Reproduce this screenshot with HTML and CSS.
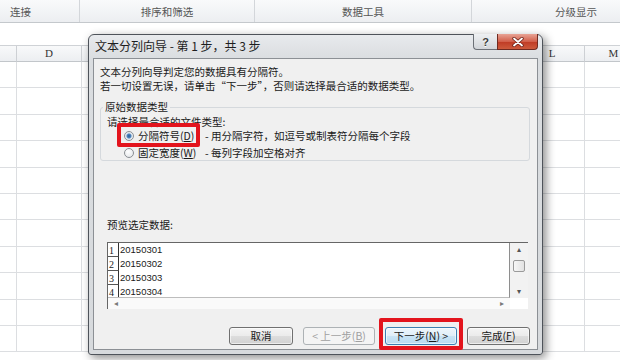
FILE: index.html
```html
<!DOCTYPE html>
<html lang="zh-CN">
<head>
  <meta charset="UTF-8">
  <meta name="viewport" content="width=device-width, initial-scale=1.0">
  <title>文本分列向导</title>
  <link rel="stylesheet" href="styles.css">
</head>
<body>
  <div class="ribbon">
    <div class="grp grp-conn">连接</div>
    <div class="grp grp-sort">排序和筛选</div>
    <div class="grp grp-tools">数据工具</div>
    <div class="grp grp-outline">分级显示</div>
  </div>
  <div class="formula-bar"></div>
  <div class="sheet" id="sheet">
    <!-- cells are built below -->
  </div>

  <div class="dialog">
    <div class="titlebar">
      <span class="title">文本分列向导 - 第 1 步，共 3 步</span>
      <span class="cap-btn cap-help">?</span>
      <span class="cap-btn cap-close">
        <svg width="12" height="10" viewBox="0 0 12 10">
          <path d="M2 1.5 L10 8.5 M10 1.5 L2 8.5" stroke="#6b2016" stroke-width="3.4" stroke-linecap="round"/>
          <path d="M2 1.5 L10 8.5 M10 1.5 L2 8.5" stroke="#fff" stroke-width="1.8" stroke-linecap="round"/>
        </svg>
      </span>
    </div>
    <div class="client">
      <p class="intro">文本分列向导判定您的数据具有分隔符。<br>若一切设置无误，请单击“下一步”，否则请选择最合适的数据类型。</p>
      <fieldset class="group-box">
        <legend>原始数据类型</legend>
        <div class="hint">请选择最合适的文件类型:</div>
        <div class="options">
          <label class="opt"><span class="radio on"></span>分隔符号(<u>D</u>)</label>
          <span class="desc">- 用分隔字符，如逗号或制表符分隔每个字段</span>
          <label class="opt"><span class="radio"></span>固定宽度(<u>W</u>)</label>
          <span class="desc">- 每列字段加空格对齐</span>
        </div>
      </fieldset>

      <div class="preview-label">预览选定数据:</div>
      <div class="preview">
        <div class="preview-main">
          <div class="lines">
            <div class="line"><span class="num">1</span>20150301</div>
            <div class="line"><span class="num">2</span>20150302</div>
            <div class="line"><span class="num">3</span>20150303</div>
            <div class="line"><span class="num">4</span>20150304</div>
          </div>
          <div class="hscroll"><span>&#9666;</span><span>&#9656;</span></div>
        </div>
        <div class="vscroll">
          <span class="arrow">&#9652;</span>
          <span class="thumb"></span>
          <span class="arrow">&#9662;</span>
        </div>
      </div>

      <div class="buttons">
        <span class="btn w-cancel">取消</span>
        <span class="btn w-step disabled">&lt; 上一步(<u>B</u>)</span>
        <span class="btn w-step default">下一步(<u>N</u>) &gt;</span>
        <span class="btn w-finish">完成(<u>F</u>)</span>
      </div>
    </div>
    <div class="mark mark-opt"></div>
    <div class="mark mark-next"></div>
  </div>

  <script>
    // 表格：列头 + 11 行空单元格（被对话框挡住的列不写字母）
    const cols = ['', 'D', '', '', '', '', '', '', '', 'L', 'M'];
    const sheet = document.getElementById('sheet');

    cols.forEach(c => {
      const head = document.createElement('div');
      head.className = 'col-head';
      head.textContent = c;
      sheet.appendChild(head);
    });

    for (let r = 0; r < 11; r++) {
      cols.forEach(() => {
        const cell = document.createElement('div');
        cell.className = 'cell';
        sheet.appendChild(cell);
      });
    }
  </script>
</body>
</html>
```

FILE: styles.css
```css
* {
  box-sizing: border-box;
}

body {
  margin: 0;
  width: 620px;
  height: 360px;
  overflow: hidden;
  position: relative;
  background: #fff;
  color: #1a1a1a;
  font-family: "Noto Sans CJK SC", "Liberation Sans", sans-serif;
  font-size: 10.5px;
}

/* ribbon group labels */
.ribbon {
  display: flex;
  height: 23px;
  background: linear-gradient(#f9fafb, #eceef1);
  border-bottom: 1px solid #c4c8cc;
  color: #555;
}

.grp {
  display: flex;
  align-items: center;
  justify-content: center;
  border-right: 1px solid #d3d6da;
}

.grp-conn {
  width: 80px;
  justify-content: flex-start;
  padding-left: 10px;
}

.grp-sort {
  width: 175px;
}

.grp-tools {
  width: 217px;
}

.grp-outline {
  flex: 1;
  justify-content: flex-start;
  padding-left: 83px;
  border-right: none;
}

.formula-bar {
  height: 22px;
  background: #fff;
}

/* worksheet */
.sheet {
  display: grid;
  grid-template-columns: 17px 65px 63px 63px 62px 63px 62px 63px 62px 65px 58px;
  grid-template-rows: 16px;
  grid-auto-rows: 26.4px;
  border-top: 1px solid #cfd2d6;
}

.col-head {
  background: linear-gradient(#f8f9fa, #eceef1);
  border-right: 1px solid #cdd0d4;
  border-bottom: 1px solid #c2c6ca;
  text-align: center;
  line-height: 15px;
  font-family: "Liberation Serif", serif;
  font-size: 11px;
  color: #333;
}

.col-head:last-child {
  text-align: right;
  padding-right: 2px;
  border-right: none;
}

.cell {
  border-right: 1px solid #dcdee1;
  border-bottom: 1px solid #dcdee1;
}

/* dialog window */
.dialog {
  position: absolute;
  left: 88px;
  top: 34px;
  width: 455px;
  height: 321px;
  display: flex;
  flex-direction: column;
  padding: 0 4px 4px;
  border: 1px solid #4e535a;
  border-radius: 6px 6px 3px 3px;
  background: linear-gradient(#e8eaed, #dadde0 24px, #d7dadd);
  box-shadow: 3px 3px 10px rgba(0, 0, 0, 0.45);
}

.titlebar {
  height: 23px;
  display: flex;
  align-items: flex-start;
}

.title {
  flex: 1;
  padding-left: 2px;
  line-height: 21px;
  font-size: 12px;
  color: #1e1e1e;
}

.cap-btn {
  height: 16px;
  margin-top: -1px;
  display: flex;
  align-items: center;
  justify-content: center;
  border: 1px solid #6c7076;
  border-top: none;
}

.cap-help {
  width: 24px;
  border-right: none;
  border-radius: 0 0 0 4px;
  background: linear-gradient(#eef0f2, #d2d5d9);
  color: #3c3c3c;
  font-family: "Liberation Sans", sans-serif;
  font-weight: bold;
  font-size: 11px;
  text-shadow: 0 1px 0 #fff;
}

.cap-close {
  width: 41px;
  border-color: #6f2a20;
  border-radius: 0 0 4px 0;
  background: linear-gradient(#e8a395, #d2604b 50%, #bf3a24 51%, #cd5a3c);
}

.client {
  flex: 1;
  display: flex;
  flex-direction: column;
  border: 1px solid #8c9095;
  background: #f0f0f0;
}

.intro {
  margin: 0;
  padding: 6px 0 0 6px;
  line-height: 14px;
}

.group-box {
  margin: 7px 7px 0 6px;
  padding: 0 0 0 6px;
  border: 1px solid #d5d9dd;
  border-radius: 3px;
}

.group-box legend {
  margin-left: -4px;
  padding: 0 2px;
  line-height: 14px;
}

.hint {
  padding-top: 1px;
  line-height: 14px;
}

.options {
  margin: -1px 0 0 17px;
  display: grid;
  grid-template-columns: 81px auto;
  grid-auto-rows: 15px;
  row-gap: 2px;
  align-items: center;
}

.opt {
  display: flex;
  align-items: center;
}

.radio {
  width: 10px;
  height: 10px;
  margin-right: 4px;
  border: 1px solid #8a8e93;
  border-radius: 50%;
  background: radial-gradient(circle at 40% 35%, #fff, #dfe2e5);
}

.radio.on {
  background: radial-gradient(circle, #2b5e96 0, #4e86c0 2px, #dfe6ee 3px, #f4f6f8 5px);
}

.preview-label {
  margin: 57px 0 0 13px;
  line-height: 14px;
}

.preview {
  margin: 10px 0 0 13px;
  width: 421px;
  height: 67px;
  display: flex;
  border-top: 1px solid #666;
  border-left: 1px solid #666;
  background: #fff;
}

.preview-main {
  width: 403px;
  display: flex;
  flex-direction: column;
}

.lines {
  height: 55px;
  overflow: hidden;
  border-right: 1px solid #8e8e8e;
  border-bottom: 1px solid #bdbdbd;
}

.line {
  display: flex;
  height: 14px;
  line-height: 14px;
  font-family: "Liberation Sans", sans-serif;
  font-size: 9.5px;
}

.num {
  width: 11px;
  margin-right: 1px;
  padding: 1px 0 0 1px;
  border-right: 1px solid #333;
  border-bottom: 1px solid #555;
  font-family: "Liberation Serif", serif;
  font-size: 10px;
}

.hscroll {
  height: 11px;
  display: flex;
  justify-content: space-between;
  padding: 0 6px;
  line-height: 10px;
  font-size: 8px;
  color: #7a7a7a;
  background: #fafafa;
}

.vscroll {
  width: 18px;
  height: 55px;
  display: flex;
  flex-direction: column;
  align-items: center;
  justify-content: space-between;
  padding: 2px 0 3px;
  background: #f2f2f2;
  font-size: 8px;
  line-height: 8px;
  color: #555;
}

.thumb {
  width: 12px;
  height: 12px;
  margin-top: -8px;
  border: 1px solid #9a9a9a;
  border-radius: 2px;
  background: linear-gradient(90deg, #f7f7f7, #e2e2e2);
}

.buttons {
  margin-top: 18px;
  padding-right: 7px;
  display: flex;
  justify-content: flex-end;
  gap: 10px;
}

.btn {
  height: 18px;
  line-height: 16px;
  text-align: center;
  border: 1px solid #707070;
  border-radius: 3px;
  background: linear-gradient(#f4f4f4, #ebebeb 50%, #dddddd 51%, #d1d1d1);
  box-shadow: inset 0 0 0 1px rgba(255, 255, 255, 0.6);
}

.w-cancel {
  width: 64px;
}

.w-step {
  width: 72px;
}

.w-finish {
  width: 63px;
}

.btn.disabled {
  border-color: #adb2b5;
  background: #f4f4f4;
  color: #a0a0a0;
  box-shadow: none;
}

.btn.default {
  border-color: #3c7fb1;
  background: linear-gradient(#eef6fb, #dfeef8 50%, #c9e4f5 51%, #b8daf0);
}

/* red annotation boxes */
.mark {
  position: absolute;
  border: 4px solid #e3141d;
  border-radius: 2px;
}

.mark-opt {
  left: 28px;
  top: 88px;
  width: 83px;
  height: 24px;
}

.mark-next {
  left: 290px;
  top: 283px;
  width: 84px;
  height: 32px;
}
```
